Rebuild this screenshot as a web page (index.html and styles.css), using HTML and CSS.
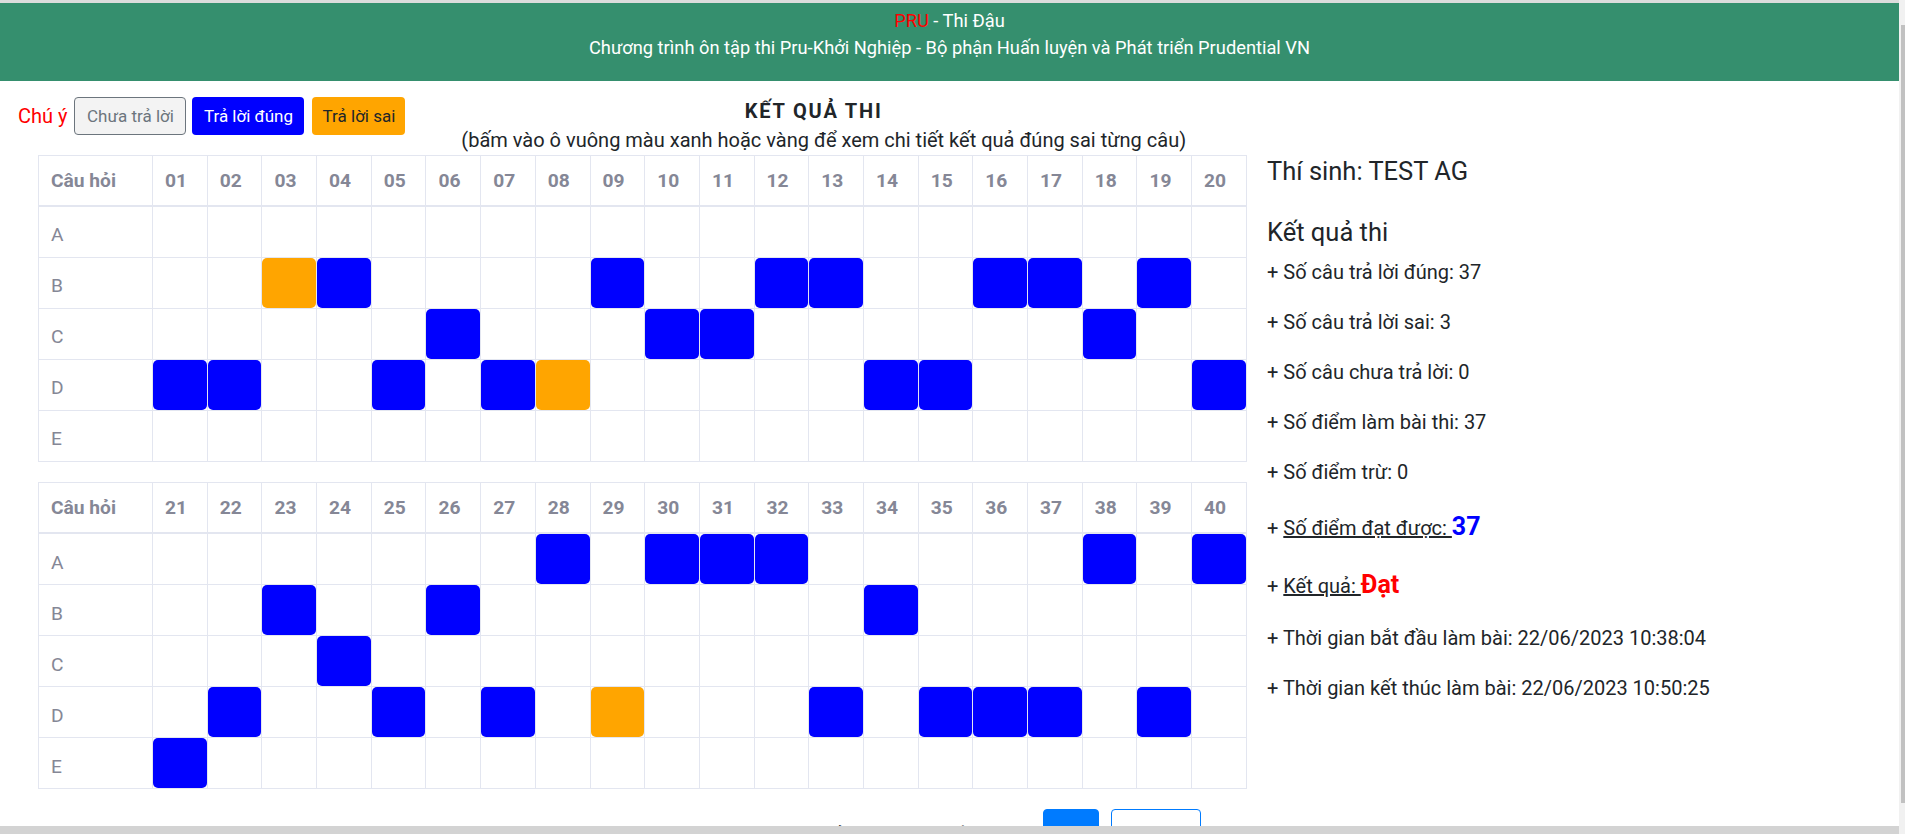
FILE: index.html
```html
<!DOCTYPE html>
<html lang="vi">
<head>
<meta charset="utf-8">
<title>PRU - Thi Đậu</title>
<link rel="stylesheet" href="styles.css">
</head>
<body>
<div class="window">
  <div class="viewport">
    <div class="topline"></div>
    <div class="page">
      <header class="site-header">
        <div><span class="pru">PRU</span> - Thi Đậu</div>
        <div>Chương trình ôn tập thi Pru-Khởi Nghiệp - Bộ phận Huấn luyện và Phát triển Prudential VN</div>
      </header>
      <main class="main">
        <section class="left-col">
          <div class="top-row">
            <div class="legend">
              <span class="legend-label">Chú ý</span>
              <span class="btn btn-none">Chưa trả lời</span>
              <span class="btn btn-right">Trả lời đúng</span>
              <span class="btn btn-wrong">Trả lời sai</span>
            </div>
            <div class="title-block">
              <div class="title">KẾT QUẢ THI</div>
              <div class="caption">(bấm vào ô vuông màu xanh hoặc vàng để xem chi tiết kết quả đúng sai từng câu)</div>
            </div>
          </div>

          <table class="grid">
            <colgroup><col class="qcol"><col span="20"></colgroup>
            <thead>
              <tr><th>Câu hỏi</th><th>01</th><th>02</th><th>03</th><th>04</th><th>05</th><th>06</th><th>07</th><th>08</th><th>09</th><th>10</th><th>11</th><th>12</th><th>13</th><th>14</th><th>15</th><th>16</th><th>17</th><th>18</th><th>19</th><th>20</th></tr>
            </thead>
            <tbody>
              <tr><td>A</td><td></td><td></td><td></td><td></td><td></td><td></td><td></td><td></td><td></td><td></td><td></td><td></td><td></td><td></td><td></td><td></td><td></td><td></td><td></td><td></td></tr>
              <tr><td>B</td><td></td><td></td><td class="c"><span class="bad"></span></td><td class="c"><span class="ok"></span></td><td></td><td></td><td></td><td></td><td class="c"><span class="ok"></span></td><td></td><td></td><td class="c"><span class="ok"></span></td><td class="c"><span class="ok"></span></td><td></td><td></td><td class="c"><span class="ok"></span></td><td class="c"><span class="ok"></span></td><td></td><td class="c"><span class="ok"></span></td><td></td></tr>
              <tr><td>C</td><td></td><td></td><td></td><td></td><td></td><td class="c"><span class="ok"></span></td><td></td><td></td><td></td><td class="c"><span class="ok"></span></td><td class="c"><span class="ok"></span></td><td></td><td></td><td></td><td></td><td></td><td></td><td class="c"><span class="ok"></span></td><td></td><td></td></tr>
              <tr><td>D</td><td class="c"><span class="ok"></span></td><td class="c"><span class="ok"></span></td><td></td><td></td><td class="c"><span class="ok"></span></td><td></td><td class="c"><span class="ok"></span></td><td class="c"><span class="bad"></span></td><td></td><td></td><td></td><td></td><td></td><td class="c"><span class="ok"></span></td><td class="c"><span class="ok"></span></td><td></td><td></td><td></td><td></td><td class="c"><span class="ok"></span></td></tr>
              <tr><td>E</td><td></td><td></td><td></td><td></td><td></td><td></td><td></td><td></td><td></td><td></td><td></td><td></td><td></td><td></td><td></td><td></td><td></td><td></td><td></td><td></td></tr>
            </tbody>
          </table>

          <table class="grid">
            <colgroup><col class="qcol"><col span="20"></colgroup>
            <thead>
              <tr><th>Câu hỏi</th><th>21</th><th>22</th><th>23</th><th>24</th><th>25</th><th>26</th><th>27</th><th>28</th><th>29</th><th>30</th><th>31</th><th>32</th><th>33</th><th>34</th><th>35</th><th>36</th><th>37</th><th>38</th><th>39</th><th>40</th></tr>
            </thead>
            <tbody>
              <tr><td>A</td><td></td><td></td><td></td><td></td><td></td><td></td><td></td><td class="c"><span class="ok"></span></td><td></td><td class="c"><span class="ok"></span></td><td class="c"><span class="ok"></span></td><td class="c"><span class="ok"></span></td><td></td><td></td><td></td><td></td><td></td><td class="c"><span class="ok"></span></td><td></td><td class="c"><span class="ok"></span></td></tr>
              <tr><td>B</td><td></td><td></td><td class="c"><span class="ok"></span></td><td></td><td></td><td class="c"><span class="ok"></span></td><td></td><td></td><td></td><td></td><td></td><td></td><td></td><td class="c"><span class="ok"></span></td><td></td><td></td><td></td><td></td><td></td><td></td></tr>
              <tr><td>C</td><td></td><td></td><td></td><td class="c"><span class="ok"></span></td><td></td><td></td><td></td><td></td><td></td><td></td><td></td><td></td><td></td><td></td><td></td><td></td><td></td><td></td><td></td><td></td></tr>
              <tr><td>D</td><td></td><td class="c"><span class="ok"></span></td><td></td><td></td><td class="c"><span class="ok"></span></td><td></td><td class="c"><span class="ok"></span></td><td></td><td class="c"><span class="bad"></span></td><td></td><td></td><td></td><td class="c"><span class="ok"></span></td><td></td><td class="c"><span class="ok"></span></td><td class="c"><span class="ok"></span></td><td class="c"><span class="ok"></span></td><td></td><td class="c"><span class="ok"></span></td><td></td></tr>
              <tr><td>E</td><td class="c"><span class="ok"></span></td><td></td><td></td><td></td><td></td><td></td><td></td><td></td><td></td><td></td><td></td><td></td><td></td><td></td><td></td><td></td><td></td><td></td><td></td><td></td></tr>
            </tbody>
          </table>

          <div class="bottom-row">
            <span class="bottom-text">Bạn có thể xem lại chi tiết bài làm tại đây</span>
            <span class="pg pg-fill"></span>
            <span class="pg pg-outline"></span>
          </div>
        </section>

        <aside class="right-col">
          <div class="name">Thí sinh: TEST AG</div>
          <div class="section-title">Kết quả thi</div>
          <div class="item">+ Số câu trả lời đúng: 37</div>
          <div class="item">+ Số câu trả lời sai: 3</div>
          <div class="item">+ Số câu chưa trả lời: 0</div>
          <div class="item">+ Số điểm làm bài thi: 37</div>
          <div class="item">+ Số điểm trừ: 0</div>
          <div class="item item-score">+ <span class="u">Số điểm đạt được: </span><span class="score">37</span></div>
          <div class="item item-result">+ <span class="u">Kết quả: </span><span class="pass">Đạt</span></div>
          <div class="item">+ Thời gian bắt đầu làm bài: 22/06/2023 10:38:04</div>
          <div class="item">+ Thời gian kết thúc làm bài: 22/06/2023 10:50:25</div>
        </aside>
      </main>
    </div>
    <div class="hbar"></div>
  </div>
  <div class="vbar"><div class="vthumb"></div></div>
</div>
</body>
</html>
```

FILE: styles.css
```css
* { box-sizing: border-box; }
html, body { margin: 0; padding: 0; height: 100%; }
body {
  font-family: Roboto, "Noto Sans", "Liberation Sans", sans-serif;
  color: #212529;
  background: #fff;
  overflow: hidden;
}
.window { display: flex; height: 834px; }
.viewport { flex: 1; min-width: 0; display: flex; flex-direction: column; }
.topline { flex: none; height: 3px; background: #dcdcdc; }
.page { flex: 1; overflow: hidden; }
.hbar { flex: none; height: 8px; background: #d3d3d3; }
.vbar { flex: none; width: 6px; background: #f1f1f1; padding: 25px 0 0 2px; }
.vthumb { height: 778px; background: #c1c1c1; }

.site-header {
  background: #358f6e;
  color: #fff;
  text-align: center;
  font-size: 18.3px;
  line-height: 27px;
  height: 78px;
  padding-top: 4px;
}
.pru { color: #ff0000; }

.main { display: flex; align-items: flex-start; }
.left-col { flex: none; width: 1252px; padding: 16px 0 0 18px; }
.top-row { display: flex; align-items: flex-start; }
.legend { display: flex; align-items: center; height: 38px; }
.legend-label { color: #ff0000; font-size: 20px; margin-right: 7px; }
.btn {
  display: inline-flex; align-items: center; justify-content: center;
  height: 38px; border-radius: 4px; font-size: 17px;
  border: 1px solid transparent;
}
.btn-none { width: 112px; background: #f3f3f3; border-color: #6c757d; color: #6c757d; }
.btn-right { width: 112px; background: #0000ff; color: #fff; margin-left: 6px; }
.btn-wrong { width: 93px; background: #ffa500; color: #212529; margin-left: 8px; }
.title-block { flex: 1; text-align: center; font-size: 20px; line-height: 28.8px; padding-right: 10px; }
.title { font-weight: 700; letter-spacing: 1.8px; padding-right: 20px; }

.grid {
  width: 1209px; margin: 0 0 20px 20px;
  border-collapse: collapse; table-layout: fixed;
  color: #858796; font-size: 19.2px;
}
.grid .qcol { width: 114px; }
.grid th, .grid td {
  border: 1px solid #e3e6f0;
  height: 51px; padding: 1px 12px 0;
  text-align: left; font-weight: 400;
}
.grid tbody td { padding-top: 6px; }
.grid thead th { border-bottom-width: 2px; font-weight: 700; }
.grid tbody td.c { padding: 0; }
.ok, .bad { display: block; height: 50px; border-radius: 5px; }
.ok { background: #0000ff; }
.bad { background: #ffa500; }

.bottom-row { display: flex; align-items: flex-start; margin: 1px 0 0 733px; }
.bottom-text { width: 282px; margin-right: 10px; padding-top: 12px; font-size: 19.2px; line-height: 28.8px; white-space: nowrap; overflow: hidden; }
.pg { height: 38px; border-radius: 4px; border: 1px solid #007bff; }
.pg-fill { width: 56px; background: #007bff; }
.pg-outline { width: 90px; margin-left: 12px; background: #fff; }

.right-col { flex: 1; padding: 74px 0 0 15px; }
.name { font-size: 25.5px; font-weight: 400; line-height: 32px; margin-bottom: 29px; }
.section-title { font-size: 25.5px; font-weight: 400; line-height: 32px; margin-bottom: 11px; }
.item { font-size: 20px; line-height: 26px; margin-bottom: 24px; white-space: nowrap; }
.item-score { line-height: 36px; }
.item-result { line-height: 29px; }
.u { text-decoration: underline; }
.score { color: #0000ff; font-weight: 700; font-size: 25px; }
.pass { color: #ff0000; font-weight: 700; font-size: 25px; }
```
